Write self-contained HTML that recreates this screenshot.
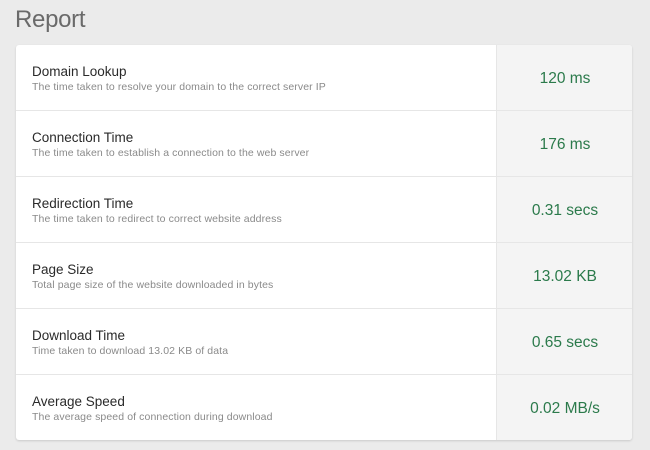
<!DOCTYPE html><html><head><style>
body{margin:0;width:650px;height:450px;background:#ebebeb;font-family:"Liberation Sans",sans-serif;overflow:hidden;position:relative}
h1{position:absolute;left:15px;top:6px;margin:0;font-weight:normal;font-size:24px;color:#6a6a6a;letter-spacing:-0.3px}
.card{position:absolute;left:16px;top:45px;width:616px;height:395px;background:#fff;border-radius:3px;box-shadow:0 1px 2px rgba(0,0,0,.15);overflow:hidden}
.row{height:65px;border-bottom:1px solid #e6e6e6;position:relative}
.row:last-child{border-bottom:none}
.l{position:absolute;left:16px;top:19px}
.t{font-size:13.5px;color:#2a2a2a}
.s{font-size:10.5px;color:#8a8a8a;margin-top:2px;letter-spacing:0.1px}
.v{position:absolute;left:480px;top:0;width:136px;height:100%;background:#f4f4f4;border-left:1px solid #e6e6e6;text-align:center;line-height:68px;font-size:15.5px;color:#2b7a4b}
</style></head><body>
<h1>Report</h1>
<div class="card">
<div class="row"><div class="l"><div class="t">Domain Lookup</div><div class="s">The time taken to resolve your domain to the correct server IP</div></div><div class="v">120 ms</div></div>
<div class="row"><div class="l"><div class="t">Connection Time</div><div class="s">The time taken to establish a connection to the web server</div></div><div class="v">176 ms</div></div>
<div class="row"><div class="l"><div class="t">Redirection Time</div><div class="s">The time taken to redirect to correct website address</div></div><div class="v">0.31 secs</div></div>
<div class="row"><div class="l"><div class="t">Page Size</div><div class="s">Total page size of the website downloaded in bytes</div></div><div class="v">13.02 KB</div></div>
<div class="row"><div class="l"><div class="t">Download Time</div><div class="s">Time taken to download 13.02 KB of data</div></div><div class="v">0.65 secs</div></div>
<div class="row"><div class="l"><div class="t">Average Speed</div><div class="s">The average speed of connection during download</div></div><div class="v">0.02 MB/s</div></div>
</div>
</body></html>
